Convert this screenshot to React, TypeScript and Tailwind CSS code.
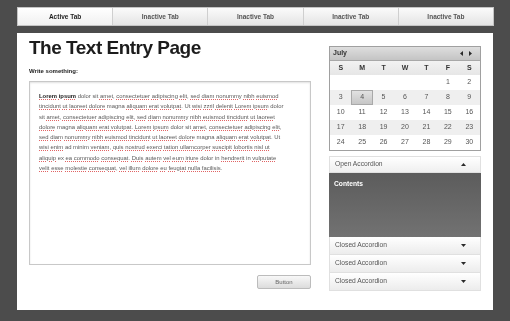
import React from "react";

const tabs = ["Active Tab", "Inactive Tab", "Inactive Tab", "Inactive Tab", "Inactive Tab"];

const lines = [
  "Lorem ipsum dolor sit amet, consectetuer adipiscing elit, sed diam nonummy nibh euismod",
  "tincidunt ut laoreet dolore magna aliquam erat volutpat. Ut wisi zzril delenit Lorem ipsum dolor",
  "sit amet, consectetuer adipiscing elit, sed diam nonummy nibh euismod tincidunt ut laoreet",
  "dolore magna aliquam erat volutpat. Lorem ipsum dolor sit amet, consectetuer adipiscing elit,",
  "sed diam nonummy nibh euismod tincidunt ut laoreet dolore magna aliquam erat volutpat. Ut",
  "wisi enim ad minim veniam, quis nostrud exerci tation ullamcorper suscipit lobortis nisl ut",
  "aliquip ex ea commodo consequat. Duis autem vel eum iriure dolor in hendrerit in vulputate",
  "velit esse molestie consequat, vel illum dolore eu feugiat nulla facilisis.",
];

// words the spell checker accepts
const known = new Set(["dolor", "sit", "magna", "Ut", "ad", "minim", "ex", "in"]);

const weeks = [
  ["", "", "", "", "", "1", "2"],
  ["3", "4", "5", "6", "7", "8", "9"],
  ["10", "11", "12", "13", "14", "15", "16"],
  ["17", "18", "19", "20", "21", "22", "23"],
  ["24", "25", "26", "27", "28", "29", "30"],
];

const Tri = ({ dir }: { dir: "up" | "down" | "left" | "right" }) => {
  const pts = {
    up: "0,3 2.5,0 5,3",
    down: "0,0 5,0 2.5,3",
    left: "3,0 3,5 0,2.5",
    right: "0,0 0,5 3,2.5",
  }[dir];
  const w = dir === "up" || dir === "down" ? 5 : 3;
  const h = dir === "up" || dir === "down" ? 3 : 5;
  return (
    <svg width={w} height={h} viewBox={`0 0 ${w} ${h}`} className="block">
      <polygon points={pts} fill="#2a2a2a" />
    </svg>
  );
};

const Line = ({ text, first }: { text: string; first: boolean }) => {
  const words = text.split(" ");
  return (
    <div className="whitespace-nowrap">
      {words.map((w, i) => {
        const bare = w.replace(/[.,]/g, "");
        const punct = w.slice(bare.length);
        const bold = first && i < 2;
        const wrong = !known.has(bare);
        return (
          <React.Fragment key={i}>
            <span
              className={
                (bold ? "font-bold text-[#222] " : "") +
                (wrong ? "underline decoration-dotted decoration-[#e06464] underline-offset-[1px]" : "")
              }
            >
              {bare}
            </span>
            {punct}
            {i < words.length - 1 ? " " : ""}
          </React.Fragment>
        );
      })}
    </div>
  );
};

export default function App() {
  return (
    <div className="w-[510px] h-[321px] overflow-hidden bg-[#4c4c4c] pt-[7px] pl-[17px] font-['Liberation_Sans',Arial,sans-serif] [will-change:transform]">
      {/* Tabs */}
      <div className="flex w-[477px] h-[19px] border border-[#c4c4c4] bg-gradient-to-b from-[#fbfbfb] to-[#e4e4e4]">
        {tabs.map((t, i) => (
          <div
            key={i}
            className={
              "flex-1 flex items-center justify-center text-[6.5px] font-bold border-l border-[#cfcfcf] first:border-l-0 " +
              (i === 0 ? "bg-gradient-to-b from-[#ffffff] to-[#f0f0f0] text-[#1e1e1e]" : "text-[#555]")
            }
          >
            {t}
          </div>
        ))}
      </div>

      {/* Page */}
      <div className="mt-[7px] w-[476px] h-[277px] bg-white flex px-[12px] gap-[18px]">
        {/* Left column */}
        <div className="w-[282px] flex flex-col">
          <h1 className="pt-[3px] text-[19px] leading-[24px] font-bold tracking-[-0.5px] text-[#1c1c1c]">
            The Text Entry Page
          </h1>
          <div className="mt-[7px] text-[6px] leading-[8px] font-bold text-[#222]">Write something:</div>
          <div className="mt-[6px] h-[184px] border border-[#c8c8c8] shadow-[inset_0_1px_2px_rgba(0,0,0,0.12)] pt-[9px] pl-[9px] text-[5.9px] leading-[10.3px] text-[#5a5a5a]">
            {lines.map((l, i) => (
              <Line key={i} text={l} first={i === 0} />
            ))}
          </div>
          <div className="mt-[10px] self-end w-[54px] h-[14px] rounded-[2px] border border-[#bcbcbc] bg-gradient-to-b from-[#f8f8f8] to-[#dcdcdc] flex items-center justify-center text-[6px] text-[#666]">
            Button
          </div>
        </div>

        {/* Right column */}
        <div className="w-[152px] pt-[13px] flex flex-col">
          {/* Calendar */}
          <div className="border border-[#a0a0a0] text-[7px]">
            <div className="h-[14px] flex items-center justify-between pl-[3px] pr-[8px] bg-gradient-to-b from-[#dedede] to-[#c4c4c4] border-b border-[#a8a8a8]">
              <span className="font-bold text-[#333]">July</span>
              <div className="flex items-center gap-[6px]">
                <Tri dir="left" />
                <Tri dir="right" />
              </div>
            </div>
            <div className="grid grid-cols-7 h-[14px] items-center bg-gradient-to-b from-[#f2f2f2] to-[#e6e6e6] font-bold text-[#333]">
              {["S", "M", "T", "W", "T", "F", "S"].map((d, i) => (
                <div key={i} className="text-center">
                  {d}
                </div>
              ))}
            </div>
            {weeks.map((w, r) => (
              <div key={r} className={"grid grid-cols-7 h-[15px] " + (r % 2 === 1 ? "bg-[#efefef]" : "bg-white")}>
                {w.map((d, i) => (
                  <div
                    key={i}
                    className={
                      "flex items-center justify-center text-[#555] " +
                      (d === "4" ? "border border-[#a9a9a9] bg-gradient-to-b from-[#e2e2e2] to-[#c6c6c6]" : "")
                    }
                  >
                    {d}
                  </div>
                ))}
              </div>
            ))}
          </div>

          {/* Accordion */}
          <div className="mt-[5px] text-[6.7px] text-[#555]">
            <div className="h-[17px] flex items-center justify-between pl-[5px] pr-[14px] border border-[#e0e0e0] bg-gradient-to-b from-[#ffffff] to-[#efefef]">
              <span>Open Accordion</span>
              <Tri dir="up" />
            </div>
            <div className="h-[64px] bg-gradient-to-b from-[#5c5c5c] to-[#727272] pt-[6px] pl-[5px] font-bold text-white">
              Contents
            </div>
            {[0, 1, 2].map((i) => (
              <div
                key={i}
                className="h-[18px] flex items-center justify-between pl-[5px] pr-[14px] border border-t-0 border-[#e0e0e0] bg-gradient-to-b from-[#ffffff] to-[#ececec]"
              >
                <span>Closed Accordion</span>
                <Tri dir="down" />
              </div>
            ))}
          </div>
        </div>
      </div>
    </div>
  );
}
